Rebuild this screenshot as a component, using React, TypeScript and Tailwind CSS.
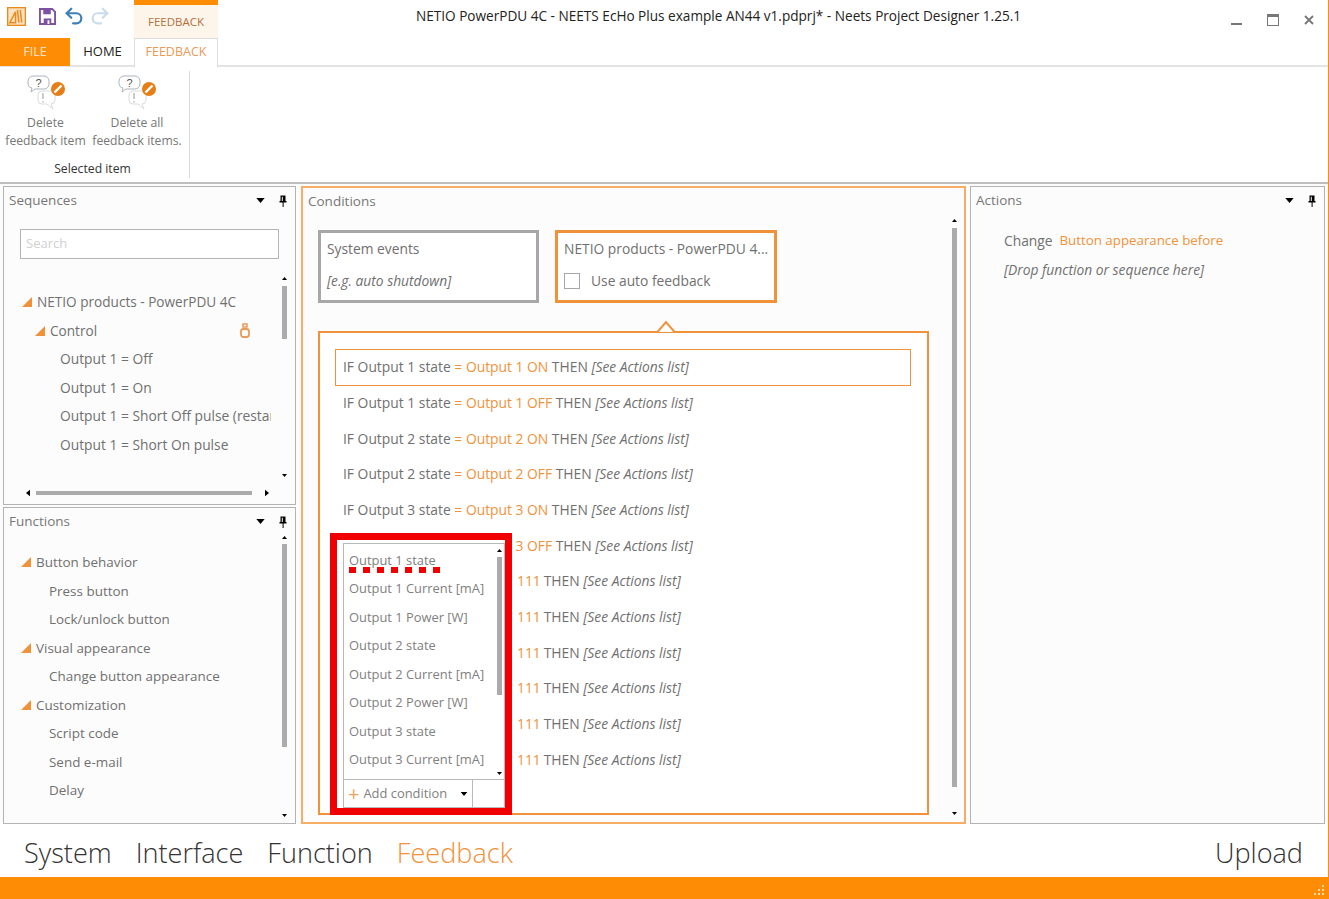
import { Redo2, Undo2 } from 'lucide-react';

const sequenceRows = [
  { label: 'NETIO products - PowerPDU 4C', level: 0 },
  { label: 'Control', level: 1, link: true },
  { label: 'Output 1 = Off', level: 2 },
  { label: 'Output 1 = On', level: 2 },
  { label: 'Output 1 = Short Off pulse (restart)', level: 2 },
  { label: 'Output 1 = Short On pulse', level: 2 },
];

const functionRows = [
  { label: 'Button behavior', group: true },
  { label: 'Press button' },
  { label: 'Lock/unlock button' },
  { label: 'Visual appearance', group: true },
  { label: 'Change button appearance' },
  { label: 'Customization', group: true },
  { label: 'Script code' },
  { label: 'Send e-mail' },
  { label: 'Delay' },
];

const stateRows = [
  ['Output 1 state', 'Output 1 ON', '[See Actions list]'],
  ['Output 1 state', 'Output 1 OFF', '[See Actions list]'],
  ['Output 2 state', 'Output 2 ON', '[See Actions list]'],
  ['Output 2 state', 'Output 2 OFF', '[See Actions list]'],
  ['Output 3 state', 'Output 3 ON', '[See Actions list]'],
  ['Output 3 state', 'Output 3 OFF', '[See Actions list]'],
];

const valueRows = ['r7', 'r8', 'r9', 'r10', 'r11', 'r12'];

const dropdownItems = [
  'Output 1 state',
  'Output 1 Current [mA]',
  'Output 1 Power [W]',
  'Output 2 state',
  'Output 2 Current [mA]',
  'Output 2 Power [W]',
  'Output 3 state',
  'Output 3 Current [mA]',
];

function Caret({ className }: { className: string }) {
  return (
    <svg viewBox="0 0 10 6" className={className}>
      <path d="M0 0h10L5 6z" fill="currentColor" />
    </svg>
  );
}

function ExpandedMark() {
  return (
    <svg viewBox="0 0 10 10" className="w-[10px] h-[10px] shrink-0 text-[#f0923a]">
      <path d="M10 0v10H0z" fill="currentColor" />
    </svg>
  );
}

function PinIcon() {
  return (
    <svg viewBox="0 0 8 12" className="w-[8px] h-[12px] text-black">
      <path d="M1.500 0.500h5v5.500h1v1.500H4.600V12h-1V7.500H.5V6h1zM2.800 1.800V6h1V1.800z" fill="currentColor" fillRule="evenodd" />
    </svg>
  );
}

function PanelHeader({ title }: { title: string }) {
  return (
    <div className="flex items-center h-[27px] pl-[5px] pr-[8px] shrink-0">
      <span className="flex-1 text-[13.500px] text-[#777]">{title}</span>
      <Caret className="w-[9px] h-[5px] mr-[14px] text-black" />
      <PinIcon />
    </div>
  );
}

function VScroll({ thumbTop, thumbHeight, className }: { thumbTop: string; thumbHeight: string; className: string }) {
  return (
    <div className={`w-[10px] shrink-0 flex flex-col items-center ${className}`}>
      <Caret className="w-[7px] h-[3px] rotate-180 text-black shrink-0" />
      <div className={`w-[5px] bg-[#ababab] ${thumbTop} ${thumbHeight}`} />
      <div className="flex-1" />
      <Caret className="w-[7px] h-[3px] text-black shrink-0" />
    </div>
  );
}

function DeleteIcon() {
  return (
    <svg viewBox="0 0 40 36" className="w-[40px] h-[36px]">
      <path d="M7 1h11a5 5 0 0 1 5 5v3a5 5 0 0 1-5 5h-9l-4 3 1-4a5 5 0 0 1-4-5V6a5 5 0 0 1 5-5z" fill="#fff" stroke="#aeb3b8" />
      <path d="M16 16h9a4 4 0 0 1 4 4v5a4 4 0 0 1-4 4l2 5-6-5h-5a4 4 0 0 1-4-4v-5a4 4 0 0 1 4-4z" fill="#fff" stroke="#d9dcdf" />
      <text x="12.500" y="12" textAnchor="middle" fontSize="11" fill="#555" fontFamily="Liberation Sans, sans-serif">?</text>
      <path d="M17 18v6M17 26v1.500" stroke="#aaa" strokeWidth="1.200" />
      <circle cx="32" cy="14" r="7" fill="#e67e16" />
      <path d="M28.500 17.500l7-7" stroke="#fff" strokeWidth="2.400" />
    </svg>
  );
}

function RibbonButton({ lines, width }: { lines: string[]; width: string }) {
  return (
    <div className={`flex flex-col items-center pt-[4px] ${width}`}>
      <DeleteIcon />
      <div className="mt-[3px] text-[12.200px] leading-[18px] text-[#777] text-center whitespace-nowrap">
        {lines.map((l) => (
          <div key={l}>{l}</div>
        ))}
      </div>
    </div>
  );
}

export default function App() {
  return (
    <div className="relative w-[1329px] h-[899px] flex flex-col bg-white overflow-hidden border-r border-[#ff8c05] font-['Open_Sans','Noto_Sans',sans-serif]">
      {/* title bar */}
      <div className="h-[38px] flex shrink-0">
        <div className="w-[134px] flex items-start pl-[7px] pt-[7px]">
          <svg viewBox="0 0 20 20" className="w-[19px] h-[19px]">
            <rect x="0.700" y="0.700" width="18.600" height="18.600" fill="#fbe3c4" stroke="#e98a1c" strokeWidth="1.400" />
            <path d="M3 16.500L9 5v11.500zM11 3l1.500 13.500M14 3l1.500 13.500" fill="none" stroke="#e98a1c" strokeWidth="1.600" />
          </svg>
          <svg viewBox="0 0 18 18" className="w-[17px] h-[17px] ml-[13px] mt-[1px]">
            <path d="M1 1h13l3 3v13H1z" fill="none" stroke="#7d51a5" strokeWidth="2" />
            <path d="M4.500 1.500h8v5h-8zM5 11h8v6H5z" fill="#7d51a5" />
            <path d="M9 13h2v4H9z" fill="#fff" />
          </svg>
          <Undo2 className="w-[22px] h-[22px] ml-[7px] -mt-[2px] text-[#3e7fb8]" strokeWidth={2.400} />
          <Redo2 className="w-[22px] h-[22px] ml-[4px] -mt-[2px] text-[#c9dcec]" strokeWidth={2.400} />
        </div>
        <div className="w-[84px] bg-[#fdf5ea] border-t-[5px] border-[#ff8c05] flex items-center justify-center pt-[1px] text-[11.500px] text-[#b5703a]">
          FEEDBACK
        </div>
        <div className="flex-1 pl-[198px] pt-[6px] text-[13.600px] text-[#222] whitespace-nowrap">
          NETIO PowerPDU 4C - NEETS EcHo Plus example AN44 v1.pdprj* - Neets Project Designer 1.25.1
        </div>
        <div className="w-[99px] flex items-center gap-[25px] pl-[2px] pt-[2px] shrink-0">
          <div className="w-[11px] h-[2px] mt-[7px] bg-[#777]" />
          <div className="w-[12px] h-[12px] border border-[#777] border-t-[3px]" />
          <svg viewBox="0 0 10 10" className="w-[10px] h-[10px] text-[#777]">
            <path d="M1 1l8 8M9 1l-8 8" stroke="currentColor" strokeWidth="1.800" />
          </svg>
        </div>
      </div>

      {/* tabs */}
      <div className="h-[29px] flex border-b-2 border-[#e4e4e4] shrink-0">
        <div className="w-[70px] h-[28px] bg-[#ff8c05] text-[#fde3c4] text-[12.500px] flex items-center justify-center">FILE</div>
        <div className="w-[64px] h-[27px] text-[#222] text-[13px] pl-[1px] flex items-center justify-center">HOME</div>
        <div className="w-[84px] h-[29px] pb-[2px] bg-white border border-b-0 border-[#dcdcdc] text-[#ea9a58] text-[12.500px] flex items-center justify-center">FEEDBACK</div>
      </div>

      {/* ribbon */}
      <div className="h-[117px] flex shrink-0 border-b-2 border-[#bdbdbd]">
        <div className="w-[190px] my-[4px] border-r border-[#d8d8d8] flex flex-col">
          <div className="flex pl-[1px] h-[88px]">
            <RibbonButton lines={['Delete', 'feedback item']} width="w-[89px]" />
            <RibbonButton lines={['Delete all', 'feedback items.']} width="w-[94px]" />
          </div>
          <div className="text-center text-[12.200px] text-[#333] pr-[4px] pt-[8px]">Selected item</div>
        </div>
      </div>

      {/* workspace */}
      <div className="h-[640px] flex shrink-0 bg-[#fcfcfc] pt-[2px] pl-[3px] pr-[3px] gap-[5px]">
        <div className="w-[293px] flex flex-col gap-[2px] shrink-0">
          <div className="h-[319px] border border-[#b4b4b4] flex flex-col shrink-0">
            <PanelHeader title="Sequences" />
            <div className="h-[30px] mx-[16px] mt-[15px] border border-[#b4b4b4] bg-white flex items-center px-[5px] text-[13px] text-[#d0d0d0] shrink-0">
              Search
            </div>
            <div className="flex-1 flex min-h-0 pt-[18px] pr-[6px]">
              <div className="flex-1 pt-[11px] mr-[8px] overflow-hidden">
                {sequenceRows.map((row) => (
                  <div key={row.label} className={`h-[28.600px] flex items-center whitespace-nowrap text-[#707070] ${row.level === 0 ? 'text-[13.600px] pl-[18px] gap-[5px]' : row.level === 1 ? 'text-[13.600px] pl-[31px] gap-[5px]' : 'text-[13.800px] pl-[56px]'}`}>
                    {row.level < 2 && <ExpandedMark />}
                    <span className={row.link ? 'w-[185px]' : ''}>{row.label}</span>
                    {row.link && (
                      <svg viewBox="0 0 10 15" className="w-[10px] h-[15px] text-[#ea9a58]">
                        <path d="M3 1h4v3H3z" fill="none" stroke="currentColor" strokeWidth="1.500" />
                        <rect x="1" y="6" width="8" height="8" rx="2.500" fill="none" stroke="currentColor" strokeWidth="1.800" />
                      </svg>
                    )}
                  </div>
                ))}
              </div>
              <VScroll thumbTop="mt-[6px]" thumbHeight="h-[53px]" className="h-[200px]" />
            </div>
            <div className="h-[14px] mb-[4px] ml-[20px] mr-[24px] flex items-center gap-[4px] shrink-0">
              <Caret className="w-[8px] h-[4px] rotate-90 text-black" />
              <div className="w-[216px] h-[4px] bg-[#ababab]" />
              <div className="flex-1" />
              <Caret className="w-[8px] h-[4px] -rotate-90 text-black" />
            </div>
          </div>
          <div className="flex-1 border border-[#b4b4b4] flex flex-col min-h-0">
            <PanelHeader title="Functions" />
            <div className="flex-1 flex min-h-0 pr-[6px]">
              <div className="flex-1 pt-[13px]">
                {functionRows.map((row) => (
                  <div key={row.label} className={`h-[28.500px] flex items-center whitespace-nowrap text-[13.450px] text-[#707070] ${row.group ? 'pl-[17px] gap-[5px]' : 'pl-[45px]'}`}>
                    {row.group && <ExpandedMark />}
                    {row.label}
                  </div>
                ))}
              </div>
              <VScroll thumbTop="mt-[5px]" thumbHeight="h-[203px]" className="h-[281px] mt-[1px]" />
            </div>
          </div>
        </div>

        {/* conditions */}
        <div className="w-[665px] border-2 border-[#f7ad66] flex flex-col shrink-0">
          <div className="h-[27px] pl-[5px] flex items-center text-[13.500px] text-[#777] shrink-0">Conditions</div>
          <div className="flex-1 flex min-h-0 pl-[15px] pr-[5px]">
            <div className="w-[611px] flex flex-col shrink-0">
              <div className="flex gap-[16px] mt-[15px] shrink-0">
                <div className="w-[221px] h-[73px] border-[3px] border-[#a7a7a7] bg-white pl-[6px] pt-[6px] text-[13.800px] text-[#707070]">
                  <div>System events</div>
                  <div className="mt-[11px] italic">[e.g. auto shutdown]</div>
                </div>
                <div className="w-[222px] h-[73px] border-[3px] border-[#f0923a] bg-white pl-[6px] pt-[6px] text-[13.800px] text-[#707070]">
                  <div className="whitespace-nowrap">NETIO products - PowerPDU 4...</div>
                  <div className="mt-[11px] flex items-center">
                    <div className="w-[16px] h-[16px] border border-[#a7a7a7] bg-white mr-[11px]" />
                    Use auto feedback
                  </div>
                </div>
              </div>
              <div className="relative mt-[28px] flex-1 border-2 border-[#f0923a] bg-white pl-[15px] pr-[16px] pt-[16px] min-h-0 mb-[7px]">
                <svg viewBox="0 0 24 12" className="absolute -top-[13px] left-[334px] w-[24px] h-[13px]">
                  <path d="M0 11.500h3.500L12 1.500l8.500 10H24" fill="#fff" stroke="#f0923a" strokeWidth="2" />
                </svg>
                <div className="h-[36.500px] border border-[#f0923a] flex items-center pl-[7px] text-[13.850px] text-[#707070] whitespace-nowrap">
                  <span>IF {stateRows[0][0]} <span className="text-[#f0923a]">= {stateRows[0][1]}</span> THEN <i>{stateRows[0][2]}</i></span>
                </div>
                {stateRows.slice(1).map((row) => (
                  <div key={row[1]} className="h-[35.700px] flex items-center pl-[8px] text-[13.850px] text-[#707070] whitespace-nowrap">
                    <span>IF {row[0]} <span className="text-[#f0923a]">= {row[1]}</span> THEN <i>{row[2]}</i></span>
                  </div>
                ))}
                {valueRows.map((key) => (
                  <div key={key} className="h-[35.700px] flex items-center pl-[182px] text-[13.850px] text-[#707070] whitespace-nowrap">
                    <span className="text-[#f0923a]">111</span>
                    <span className="ml-[3px]">THEN <i>[See Actions list]</i></span>
                  </div>
                ))}
              </div>
            </div>
            <div className="flex-1" />
            <VScroll thumbTop="mt-[6px]" thumbHeight="h-[559px]" className="h-[596px] mt-[4px]" />
          </div>
        </div>

        {/* actions */}
        <div className="flex-1 border border-[#b4b4b4] flex flex-col ml-[-1px]">
          <PanelHeader title="Actions" />
          <div className="pl-[33px] pt-[17px] text-[13.800px] text-[#707070]">
            <div className="flex gap-[7px] items-center">
              <span>Change</span>
              <span className="text-[#f0923a] text-[13.300px]">Button appearance before</span>
            </div>
            <div className="mt-[8px] italic">[Drop function or sequence here]</div>
          </div>
        </div>
      </div>

      {/* bottom navigation */}
      <div className="flex-1 flex items-center pt-[6px] pl-[24px] pr-[25px] gap-[24px] text-[27.100px] font-light text-[#333] bg-white">
        <span>System</span>
        <span>Interface</span>
        <span>Function</span>
        <span className="text-[#f0923a]">Feedback</span>
        <span className="ml-auto">Upload</span>
      </div>
      <div className="h-[22px] bg-[#ff8c05] shrink-0 flex justify-end items-end pr-[3px] pb-[2px]">
        <svg viewBox="0 0 12 12" className="w-[12px] h-[12px] text-[#fcd9ae]">
          <path d="M9 0h2v2H9zM5 4h2v2H5zM9 4h2v2H9zM1 8h2v2H1zM5 8h2v2H5zM9 8h2v2H9z" fill="currentColor" />
        </svg>
      </div>

      {/* dropdown over condition rows */}
      <div className="absolute left-[330px] top-[533px] w-[182px] h-[282px] border-[7px] border-[#f00000] bg-white">
        <div className="ml-[6px] mt-[3px] w-[162px] h-[265px] border border-[#b9b9b9] flex flex-col">
          <div className="flex-1 flex min-h-0">
            <div className="flex-1 pt-[2px]">
              {dropdownItems.map((item) => (
                <div key={item} className="h-[28.500px] flex items-center pl-[5px] text-[12.900px] text-[#808080] whitespace-nowrap">
                  {item}
                </div>
              ))}
            </div>
            <VScroll thumbTop="mt-[5px]" thumbHeight="h-[138px]" className="h-[226px] mt-[5px]" />
          </div>
          <div className="h-[28px] border-t border-[#b9b9b9] flex shrink-0">
            <div className="w-[129px] border-r border-[#b9b9b9] flex items-center pl-[4px] text-[12.900px] text-[#808080] whitespace-nowrap">
              <span className="text-[#f0a35e] text-[20px] leading-none mr-[4px]">+</span>
              Add condition
              <Caret className="w-[8px] h-[4px] ml-auto mr-[4px] text-black" />
            </div>
          </div>
        </div>
        <div className="absolute left-[12px] top-[27px] flex gap-[7px]">
          {[0, 1, 2, 3, 4, 5, 6].map((n) => (
            <div key={n} className="w-[7px] h-[6px] bg-[#f00000]" />
          ))}
        </div>
      </div>
    </div>
  );
}
